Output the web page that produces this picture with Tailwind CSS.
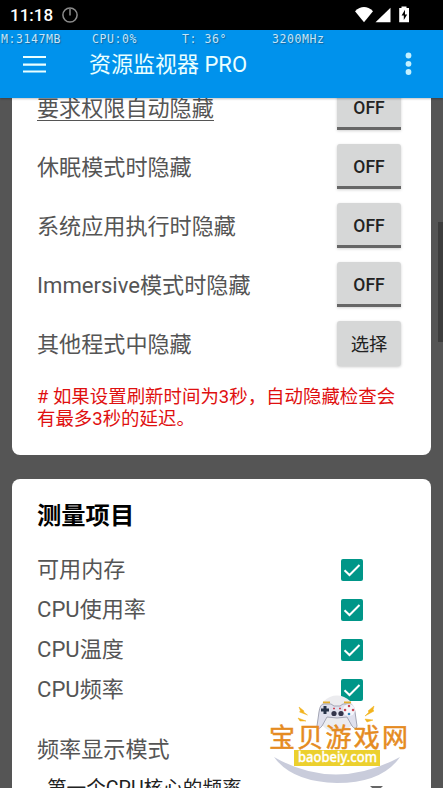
<!DOCTYPE html>
<html lang="zh-CN">
<head>
<meta charset="utf-8">
<title>资源监视器 PRO</title>
<script src="https://cdn.jsdelivr.net/npm/@tailwindcss/browser@4"></script>
</head>
<body class="bg-[#555] font-['Roboto','Noto_Sans_CJK_SC',sans-serif]">
<div class="relative flex h-[788px] w-[443px] flex-col overflow-hidden bg-[#555]">
  <div class="flex h-[30px] shrink-0 items-center bg-black pl-[10px] text-white">
    <span class="w-[44px] text-[17px] leading-[30px] font-medium whitespace-nowrap">11:18</span>
    <svg class="ml-[8px]" width="16" height="16" viewBox="0 0 16 16" fill="none" stroke="#8d8d8d" stroke-width="1.5"><circle cx="8" cy="8" r="7.1"/><path d="M8 2v6.5"/></svg>
    <svg class="ml-auto mr-[32px]" width="56" height="18" viewBox="0 0 56 18" fill="#fff"><path d="M0 5.2Q9 -3.2 18 5.2L9 16.2Z"/><path d="M35.500 1.800V16.200H20.500Z"/><path d="M46.500 0.500h5v1.500h2.500v14.200h-9.800V2h2.300Z"/><path d="M50 3.700 46.600 9.500h2.200v4.500l3.400-5.600h-2.200Z" fill="#000"/></svg>
  </div>
  <header class="z-10 h-[68px] shrink-0 bg-[#0092ec] shadow-[0_1px_2px_rgba(0,0,0,0.25)]">
    <div class="flex h-[17px] font-['DejaVu_Sans_Mono',monospace] text-[11.500px] leading-[18px] tracking-[0.56px] whitespace-pre text-[#c4e5f9] [text-shadow:1px_1px_1px_#17659b]">
      <span class="w-[91px] pl-px">M:3147MB</span><span class="w-[91px] pl-px">CPU:0%</span><span class="w-[90px]">T: 36°</span><span>3200MHz</span>
    </div>
    <div class="flex h-[34px] items-center pl-[23px]">
      <svg width="23" height="18" viewBox="0 0 23 18" fill="#eaffff"><path d="M0 1h23v2H0zM0 8.500h23v2.200H0zM0 15.500h23v2H0z"/></svg>
      <h1 class="ml-[43px] pt-[2px] text-[22px] leading-[34px] text-[#eaffff]">资源监视器 PRO</h1>
      <svg class="ml-auto mr-[31px]" width="7" height="24" viewBox="0 0 7 24" fill="#c4f1ff"><circle cx="3.500" cy="3.500" r="2.900"/><circle cx="3.500" cy="11.800" r="2.900"/><circle cx="3.500" cy="20" r="2.900"/></svg>
    </div>
  </header>
  <main class="flex flex-col gap-6 px-3 text-[22.100px] text-[#555]">
    <section class="-mt-[20px] flex h-[377px] shrink-0 flex-col rounded-lg bg-white pr-[30px] pl-[25px]">
      <div class="flex h-[59px] items-center justify-between"><span class="mt-[2px] border-b border-[#555] leading-[24px]">要求权限自动隐藏</span><span class="h-[45px] w-[64px] rounded-t-[3px] border-b-[3px] border-[#666] bg-[#d6d7d7] text-center text-[17.500px] leading-[46px] font-medium text-[#222] shadow-[0_1px_3px_rgba(0,0,0,0.18)]">OFF</span></div>
      <div class="flex h-[59px] items-center justify-between"><span class="pt-[2px]">休眠模式时隐藏</span><span class="h-[45px] w-[64px] rounded-t-[3px] border-b-[3px] border-[#666] bg-[#d6d7d7] text-center text-[17.500px] leading-[46px] font-medium text-[#222] shadow-[0_1px_3px_rgba(0,0,0,0.18)]">OFF</span></div>
      <div class="flex h-[59px] items-center justify-between"><span class="pt-[2px]">系统应用执行时隐藏</span><span class="h-[45px] w-[64px] rounded-t-[3px] border-b-[3px] border-[#666] bg-[#d6d7d7] text-center text-[17.500px] leading-[46px] font-medium text-[#222] shadow-[0_1px_3px_rgba(0,0,0,0.18)]">OFF</span></div>
      <div class="flex h-[59px] items-center justify-between"><span class="pt-[2px]">Immersive模式时隐藏</span><span class="h-[45px] w-[64px] rounded-t-[3px] border-b-[3px] border-[#666] bg-[#d6d7d7] text-center text-[17.500px] leading-[46px] font-medium text-[#222] shadow-[0_1px_3px_rgba(0,0,0,0.18)]">OFF</span></div>
      <div class="flex h-[59px] items-center justify-between"><span class="pt-[2px]">其他程式中隐藏</span><span class="h-[45px] w-[64px] rounded-[3px] bg-[#d6d7d7] text-center text-[18.300px] leading-[48px] text-[#222] shadow-[0_1px_3px_rgba(0,0,0,0.22)]">选择</span></div>
      <p class="mt-[13px] text-[18.450px] leading-[22px] whitespace-nowrap text-[#df1010]"># 如果设置刷新时间为3秒，自动隐藏检查会<br>有最多3秒的延迟。</p>
    </section>
    <section class="flex h-[400px] shrink-0 flex-col rounded-lg bg-white pr-[68px] pl-[25px]">
      <h2 class="mt-[19px] mb-[15px] text-[24.300px] leading-[36px] font-bold text-black">测量项目</h2>
      <div class="flex h-[40px] items-center justify-between"><span class="pt-[2px]">可用内存</span><svg class="mt-[2px]" width="22" height="22" viewBox="0 0 22 22"><rect width="22" height="22" rx="2" fill="#009688"/><path d="M3.500 11.300 8.500 16 18.500 6" fill="none" stroke="#fff" stroke-width="2"/></svg></div>
      <div class="flex h-[40px] items-center justify-between"><span class="pt-[2px]">CPU使用率</span><svg class="mt-[2px]" width="22" height="22" viewBox="0 0 22 22"><rect width="22" height="22" rx="2" fill="#009688"/><path d="M3.500 11.300 8.500 16 18.500 6" fill="none" stroke="#fff" stroke-width="2"/></svg></div>
      <div class="flex h-[40px] items-center justify-between"><span class="pt-[2px]">CPU温度</span><svg class="mt-[2px]" width="22" height="22" viewBox="0 0 22 22"><rect width="22" height="22" rx="2" fill="#009688"/><path d="M3.500 11.300 8.500 16 18.500 6" fill="none" stroke="#fff" stroke-width="2"/></svg></div>
      <div class="flex h-[40px] items-center justify-between"><span class="pt-[2px]">CPU频率</span><svg class="mt-[2px]" width="22" height="22" viewBox="0 0 22 22"><rect width="22" height="22" rx="2" fill="#009688"/><path d="M3.500 11.300 8.500 16 18.500 6" fill="none" stroke="#fff" stroke-width="2"/></svg></div>
      <div class="mt-[20px] flex h-[40px] items-center pt-[2px]">频率显示模式</div>
      <div class="flex h-[40px] items-center justify-between pl-[10px] text-[19.600px] text-[#222]"><span>第一个CPU核心的频率</span></div>
    </section>
  </main>
  <div class="absolute top-[222px] right-0 h-[120px] w-[5px] bg-[#3d3d3d]"></div>
  <svg class="absolute top-[680px] left-[255px]" width="188" height="108" viewBox="0 0 188 108">
    <path d="M115 106h13l-6.500 6Z" fill="#666"/>
    <path d="M19 77Q80 112 145 77Q127 103 82 103Q37 102 19 77Z" fill="#c9ccdb"/>
    <circle cx="82" cy="34" r="18.500" fill="#ececef"/>
    <path d="M44 27l5 4-.5 1 4 3-8-3 1-1ZM43 38l8 3-6 0ZM119 26l-6 5 1 1-4 4 9-5-1-1ZM118 40l-8-1 2 3Z" fill="#f2b31c" stroke="#f2b31c" stroke-width="0.5"/>
    <path d="M68 22.500h7M89 22.500h7" stroke="#e5ae2c" stroke-width="2"/>
    <path d="M69 24h7l3 2h6l3-2h7q4 1 5 8l2 14q-1 5-5 0l-5-9q-10 2-20 0l-5 9q-4 5-5 0l2-14q1-8 5-8Z" fill="#dfe0ed" stroke="#a4a6b5" stroke-width="1"/>
    <path d="M66 30h8M70 26v8" stroke="#273349" stroke-width="3"/>
    <circle cx="94" cy="30" r="6" fill="#f5f6fc"/><path d="M94 26v.1M90 30h.1M98 30h.1" stroke="#c94b58" stroke-width="2.500" stroke-linecap="round"/><circle cx="94" cy="34" r="1.300" fill="#3180b8"/>
    <circle cx="79" cy="33.500" r="2.600" fill="#33354b"/><circle cx="86" cy="33.500" r="2.600" fill="#33354b"/><path d="M78 28.500h2M84 28.500h2" stroke="#d14352" stroke-width="1.500"/>
    <text x="14" y="66.500" textLength="139" font-family="Noto Sans CJK SC, sans-serif" font-size="26" font-weight="400" fill="#e58b21" stroke="#e58b21" stroke-width="0.500">宝贝游戏网</text>
    <rect x="39" y="70" width="86" height="16" fill="#ecd02e"/>
    <text x="43" y="82" textLength="79" lengthAdjust="spacingAndGlyphs" font-family="Noto Sans, sans-serif" font-size="13.500" font-weight="500" fill="#fff" stroke="#fff" stroke-width="0.300">baobeiy.com</text>
  </svg>
</div>
</body>
</html>
